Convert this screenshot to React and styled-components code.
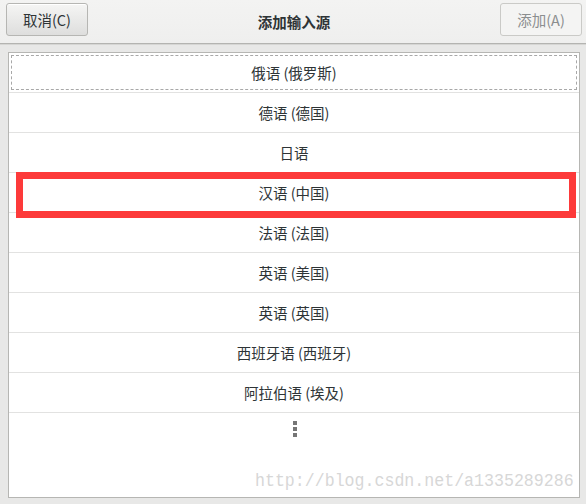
import React from 'react'
import styled, { createGlobalStyle } from 'styled-components'

const GlobalStyle = createGlobalStyle`
	html, body {
		margin: 0;
		padding: 0;
		background: #e8e8e7;
	}
	body {
		font-family: "Noto Sans", "Noto Sans CJK SC", sans-serif;
		color: #2e3436;
	}
`

const Window = styled.div`
	position: relative;
	width: 586px;
	height: 504px;
	display: flex;
	flex-direction: column;
	background: #e8e8e7;
	overflow: hidden;
`

const HeaderBar = styled.header`
	box-sizing: border-box;
	height: 44px;
	display: grid;
	grid-template-columns: 82px 1fr 82px;
	align-items: start;
	padding: 3px 4px 0 6px;
	background: linear-gradient(#f3f3f2, #efefee);
	border-bottom: 1px solid #b4b4b1;
	box-shadow: 0 1px 0 #d6d6d4;
`

const Button = styled.button`
	box-sizing: border-box;
	height: 33px;
	width: 82px;
	border-radius: 3px;
	border: 1px solid ${ p => p.disabled ? '#cacac7' : '#b6b6b3' };
	background: ${ p => p.disabled ? '#f4f4f3' : 'linear-gradient(#f5f5f4, #dededd)' };
	color: ${ p => p.disabled ? '#8b8e8f' : '#2e3436' };
	font-family: "Noto Sans CJK SC", sans-serif;
	font-size: 14.5px;
	padding: 0;
	box-shadow: ${ p => p.disabled ? 'none' : 'inset 0 1px 0 #fff' };
`

const Title = styled.h1`
	margin: 0;
	height: 36px;
	display: flex;
	align-items: center;
	justify-content: center;
	font-family: "Noto Sans CJK SC", sans-serif;
	font-size: 14.5px;
	font-weight: 700;
	color: #2e3436;
`

const Content = styled.main`
	flex: 1;
	display: flex;
	padding: 8px 6px 6px 8px;
	min-height: 0;
`

const Frame = styled.div`
	flex: 1;
	border: 1px solid #b6b6b3;
	background: #fff;
	display: flex;
	flex-direction: column;
`

const Row = styled.div`
	position: relative;
	box-sizing: border-box;
	height: 40px;
	flex: none;
	display: flex;
	align-items: center;
	justify-content: center;
	border-bottom: 1px solid #e2e2e1;
	font-family: "Noto Sans CJK SC", sans-serif;
	font-size: 14.5px;
	color: #2e3436;

	&::before {
		content: '';
		display: ${ p => p.focused ? 'block' : 'none' };
		position: absolute;
		inset: 2px 2px 2px 2px;
		border: 1px dashed #a8a8a8;
	}
`

const Highlight = styled.div`
	position: absolute;
	left: 7px;
	top: -1px;
	width: 560px;
	height: 46px;
	box-sizing: border-box;
	border: 7px solid #fd3a3a;
	pointer-events: none;
`

const MoreRow = styled.div`
	height: 40px;
	flex: none;
	display: flex;
	justify-content: center;
	padding-top: 8px;
	box-sizing: border-box;
`

const Dots = styled.div`
	display: flex;
	flex-direction: column;
	gap: 2px;
	margin-left: 1px;
`

const Dot = styled.span`
	width: 4px;
	height: 4px;
	background: #767676;
`

const Watermark = styled.div`
	position: absolute;
	left: 255px;
	top: 470px;
	font-family: "Liberation Mono", monospace;
	font-size: 16.6px;
	color: #d7d7d7;
	transform: scaleY(1.15);
	transform-origin: left top;
	white-space: nowrap;
	pointer-events: none;
`

const languages = [
	'俄语 (俄罗斯)',
	'德语 (德国)',
	'日语',
	'汉语 (中国)',
	'法语 (法国)',
	'英语 (美国)',
	'英语 (英国)',
	'西班牙语 (西班牙)',
	'阿拉伯语 (埃及)',
]

const App = () =>
{
	return (
		<Window>
			<GlobalStyle />
			<HeaderBar>
				<Button>取消(C)</Button>
				<Title>添加输入源</Title>
				<Button disabled>添加(A)</Button>
			</HeaderBar>
			<Content>
				<Frame>
					{ languages.map( ( name, i ) => (
						<Row key={ name } focused={ i === 0 ? 1 : 0 }>
							{ name }
							{ name === '汉语 (中国)' && <Highlight /> }
						</Row>
					) ) }
					<MoreRow>
						<Dots>
							<Dot />
							<Dot />
							<Dot />
						</Dots>
					</MoreRow>
				</Frame>
			</Content>
			<Watermark>http://blog.csdn.net/a1335289286</Watermark>
		</Window>
	)
}

export default App
